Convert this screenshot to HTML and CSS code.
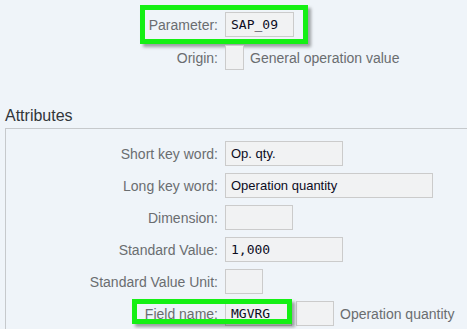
FILE: index.html
```html
<!DOCTYPE html>
<html lang="en">
<head>
    <meta charset="UTF-8">
    <title>Parameter SAP_09</title>
    <link rel="stylesheet" href="styles.css">
</head>
<body>
    <div class="page">
        <div class="top">
            <div class="row">
                <span class="label">Parameter:</span>
                <span class="field mono w-param">SAP_09</span>
                <span class="mark mark-param"></span>
            </div>
            <div class="row">
                <span class="label">Origin:</span>
                <span class="check"></span>
                <span class="note">General operation value</span>
            </div>
        </div>

        <h3 class="section-title">Attributes</h3>
        <div class="frame">
            <div class="row">
                <span class="label">Short key word:</span>
                <span class="field w-mid">Op. qty.</span>
            </div>
            <div class="row">
                <span class="label">Long key word:</span>
                <span class="field w-long">Operation quantity</span>
            </div>
            <div class="row">
                <span class="label">Dimension:</span>
                <span class="field w-short"></span>
            </div>
            <div class="row">
                <span class="label">Standard Value:</span>
                <span class="field mono w-mid">1,000</span>
            </div>
            <div class="row">
                <span class="label">Standard Value Unit:</span>
                <span class="field w-tiny"></span>
            </div>
            <div class="row">
                <span class="label">Field name:</span>
                <span class="field mono w-fname">MGVRG</span>
                <span class="field w-tiny"></span>
                <span class="note">Operation quantity</span>
                <span class="mark mark-field"></span>
            </div>
        </div>
    </div>
</body>
</html>
```

FILE: styles.css
```css
body {
    margin: 0;
    background: #eff4f9;
    font-family: "Liberation Sans", Arial, sans-serif;
    overflow: hidden;
}
.page {
    padding-left: 5px;
}
.top {
    padding-top: 12px;
    display: flex;
    flex-direction: column;
    gap: 8px;
}
.row {
    position: relative;
    display: flex;
    align-items: center;
    height: 25px;
}
.label {
    flex: 0 0 220px;
    text-align: right;
    padding-right: 7px;
    box-sizing: border-box;
    font-size: 14px;
    color: #6a6d70;
    white-space: nowrap;
}
.frame .label {
    flex-basis: 219px;
}
.field {
    box-sizing: border-box;
    height: 25px;
    line-height: 23px;
    padding: 0 5px;
    background: #f1f2f3;
    border: 1px solid #cbcbcb;
    font-size: 13px;
    color: #0c0c1e;
    white-space: nowrap;
    overflow: hidden;
}
.mono {
    font-family: "DejaVu Sans Mono", "Liberation Mono", monospace;
}
.w-param { width: 69px; }
.w-mid { width: 118px; }
.w-long { width: 208px; }
.w-short { width: 68px; }
.w-tiny { width: 38px; }
.w-fname { width: 67px; margin-right: 4px; }
.check {
    box-sizing: border-box;
    width: 19px;
    height: 25px;
    background: #f1f2f3;
    border: 1px solid #cbcbcb;
}
.note {
    margin-left: 6px;
    font-size: 14px;
    color: #6a6d70;
    white-space: nowrap;
}
.section-title {
    margin: 36px 0 2px;
    font-size: 16px;
    line-height: 20px;
    font-weight: normal;
    color: #32363a;
}
.frame {
    border-top: 1px solid #c6c9cc;
    border-left: 1px solid #c6c9cc;
    padding: 12px 0 3px;
    display: flex;
    flex-direction: column;
    gap: 7px;
}
.mark {
    position: absolute;
    box-sizing: border-box;
    border: 5px solid #14f014;
    box-shadow: 3px 3px 3px rgba(0, 0, 0, 0.35);
}
.mark-param {
    left: 135px;
    top: -7px;
    width: 168px;
    height: 39px;
}
.mark-field {
    left: 126px;
    top: -2px;
    width: 160px;
    height: 25px;
}
```
